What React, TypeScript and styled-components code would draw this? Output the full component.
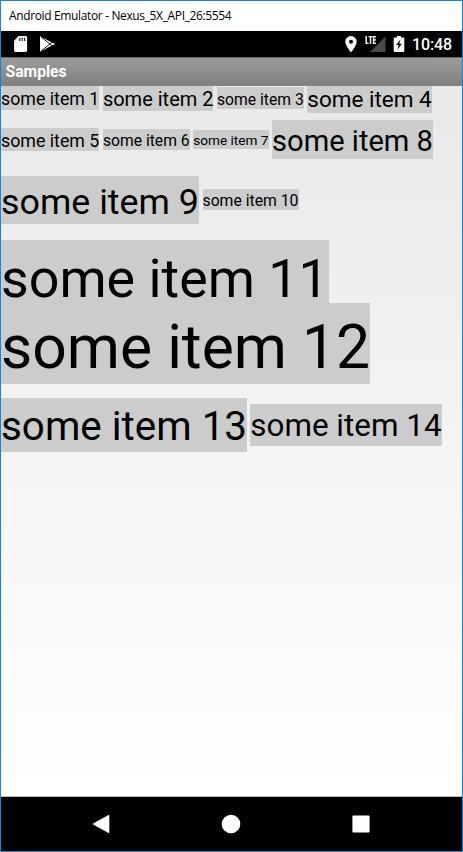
import React from "react";
import styled, { createGlobalStyle } from "styled-components";

const GlobalStyle = createGlobalStyle`
  * { box-sizing: border-box; }
  body { margin: 0; overflow: hidden; background: #fff; }
`;

const Window = styled.main`
  display: flex;
  flex-direction: column;
  width: 463px;
  height: 852px;
  border: 1px solid #1883d7;
  background: #fff;
  font-family: Roboto, sans-serif;
`;

const TitleBar = styled.header`
  flex: none;
  height: 30px;
  padding: 0 8px;
  color: #000;
  font: 12px/30px "Open Sans", "Noto Sans", sans-serif;
  letter-spacing: -0.36px;
  white-space: nowrap;
`;

const StatusBar = styled.div`
  flex: none;
  display: flex;
  align-items: center;
  justify-content: space-between;
  height: 26px;
  padding: 0 9px 0 12px;
  background: #000;
  color: #fff;
`;

const StatusGroup = styled.div<{ $gap: number }>`
  display: flex;
  align-items: center;
  gap: ${(p) => p.$gap}px;
  svg { display: block; }
`;

const Clock = styled.time`
  width: 41px;
  font-size: 16px;
  font-weight: 500;
  line-height: 26px;
  letter-spacing: -0.1px;
  padding-top: 2px;
  white-space: nowrap;
`;

const ActionBar = styled.div`
  flex: none;
  height: 29px;
  padding-left: 4.5px;
  border-top: 1px solid #6a6a6a;
  border-bottom: 1px solid #858585;
  background: linear-gradient(#9b9b9b, #808080);
  color: #fff;
  font-size: 15.7px;
  font-weight: 700;
  line-height: 28px;
`;

const Content = styled.section`
  flex: 1;
  min-height: 0;
  overflow: hidden;
  display: flex;
  flex-direction: column;
  background: linear-gradient(#e9e9e9, #fff);
  border-bottom: 1px solid #bbb;
`;

const Row = styled.div<{ $offset: number; $height: number }>`
  flex: none;
  display: flex;
  align-items: center;
  gap: 3.5px;
  height: ${(p) => p.$height}px;
  margin-top: ${(p) => p.$offset}px;
`;

const Item = styled.span<{ $size: number; $width: number }>`
  flex: none;
  width: ${(p) => p.$width}px;
  height: 1.34em;
  padding-top: calc(0.1em + 0.5px);
  background: #ccc;
  color: #000;
  font-size: ${(p) => p.$size}px;
  line-height: 1.24em;
  white-space: nowrap;
`;

const NavBar = styled.nav`
  flex: none;
  display: flex;
  align-items: center;
  justify-content: center;
  gap: 110px;
  height: 54px;
  padding-right: 2px;
  background: #000;
  svg { display: block; }
`;

type Entry = { n: number; size: number; width: number };
type Line = { offset: number; height: number; items: Entry[] };

const lines: Line[] = [
  {
    offset: -3,
    height: 30,
    items: [
      { n: 1, size: 17.8, width: 98.4 },
      { n: 2, size: 20, width: 110.6 },
      { n: 3, size: 15.7, width: 86.8 },
      { n: 4, size: 22.5, width: 124.4 },
    ],
  },
  {
    offset: 7,
    height: 39,
    items: [
      { n: 5, size: 17.8, width: 98.4 },
      { n: 6, size: 15.7, width: 86.8 },
      { n: 7, size: 13.6, width: 75.4 },
      { n: 8, size: 29.1, width: 161.3 },
    ],
  },
  {
    offset: 17,
    height: 47.5,
    items: [
      { n: 9, size: 35.8, width: 198 },
      { n: 10, size: 15.75, width: 96 },
    ],
  },
  { offset: 16.5, height: 71.5, items: [{ n: 11, size: 53.8, width: 328 }] },
  { offset: -8.2, height: 80.7, items: [{ n: 12, size: 60.6, width: 369 }] },
  {
    offset: 13.8,
    height: 54,
    items: [
      { n: 13, size: 40.4, width: 245.8 },
      { n: 14, size: 31.4, width: 192 },
    ],
  },
];

export default function App() {
  return (
    <>
      <GlobalStyle />
      <Window>
        <TitleBar>Android Emulator - Nexus_5X_API_26:5554</TitleBar>
        <StatusBar>
          <StatusGroup $gap={11}>
            <svg width="15" height="18" viewBox="0 0 15 18">
              <path fill="#fff" d="M5.5 1h7.2q1.4 0 1.4 1.4v13.2q0 1.4-1.4 1.4H2.5q-1.4 0-1.4-1.4V5.7z" />
              <path stroke="#222" strokeWidth="1.2" d="M6.8 2.7v3.200M9.2 2.700v3.200M11.600 2.700v3.200" />
            </svg>
            <svg width="17" height="18" viewBox="0 0 17 18">
              <path fill="#fff" d="M1 1.200 12.400 7.200l3.800 1.800-3.800 1.800L1 16.800z" />
              <path fill="none" stroke="#222" strokeWidth="1" d="m2 1.900 11.600 9.300M2 16.100l11.600-9.300" />
            </svg>
          </StatusGroup>
          <StatusGroup $gap={7}>
            <svg width="14" height="18" viewBox="0 0 14 18">
              <path fill="#fff" fillRule="evenodd" d="M7 1a5.700 5.700 0 0 0-5.700 5.700C1.300 10.700 7 17.200 7 17.200s5.700-6.500 5.700-10.500A5.700 5.700 0 0 0 7 1m0 3.700a2 2 0 1 1 0 4 2 2 0 0 1 0-4" />
            </svg>
            <svg width="21" height="18" viewBox="0 0 21 18">
              <path fill="#4a4a4a" d="M20.500 1.500V17H5z" />
              <path fill="none" stroke="#e4e4e4" strokeWidth="1.600" d="M1.200 1v7.200h2.400M3.500 1.800h4M5.500 1.800v7.200M11 1.800H8.600v6.400H11M8.600 4.900h2.200" />
            </svg>
            <svg width="12" height="18" viewBox="0 0 12 18">
              <path fill="#fff" d="M4 1h4v1.500h2.300q1 0 1 1V16q0 1-1 1H1.700q-1 0-1-1V3.500q0-1 1-1H4z" />
              <path fill="#000" d="M7.400 4.500 3.200 9.900h2.500l-1.300 4.800 4.400-5.900H6.300z" />
            </svg>
            <Clock>10:48</Clock>
          </StatusGroup>
        </StatusBar>
        <ActionBar>Samples</ActionBar>
        <Content>
          {lines.map((line) => (
            <Row key={line.items[0].n} $offset={line.offset} $height={line.height}>
              {line.items.map((item) => (
                <Item key={item.n} $size={item.size} $width={item.width}>
                  some item {item.n}
                </Item>
              ))}
            </Row>
          ))}
        </Content>
        <NavBar>
          <svg width="20" height="20" viewBox="0 0 20 20">
            <path fill="#fff" d="M17.500.900q.800-.300.800.700v16.800q0 1-.8.700L2.500 10.700q-1-.7 0-1.400z" />
          </svg>
          <svg width="20" height="20" viewBox="0 0 20 20">
            <circle cx="10" cy="10" r="9.300" fill="#fff" />
          </svg>
          <svg width="20" height="20" viewBox="0 0 20 20">
            <rect x="1.400" y="1.400" width="17.200" height="17.200" rx="1" fill="#fff" />
          </svg>
        </NavBar>
      </Window>
    </>
  );
}
